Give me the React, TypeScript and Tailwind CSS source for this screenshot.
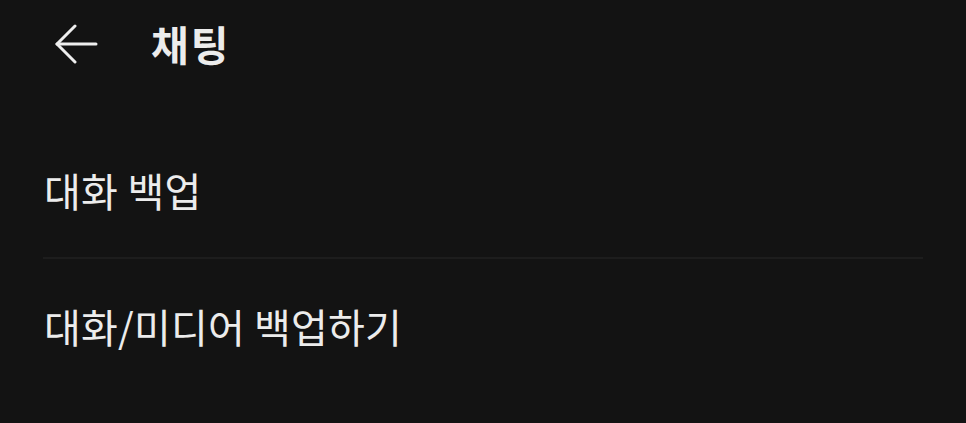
export default function App() {
  const font = { fontFamily: '"Noto Sans CJK KR", "Noto Sans", sans-serif' };
  return (
    <div className="w-[966px] h-[423px] bg-[#131313] text-[#ececec] overflow-hidden" style={font}>
      <div className="h-[88px] flex items-center">
        <div className="w-[151px] pl-[54px] flex items-center">
          <svg width="44" height="40" viewBox="0 0 44 40" fill="none" stroke="#eeeeee" strokeWidth="3" strokeLinecap="round" strokeLinejoin="round">
            <path d="M3 20 H42" />
            <path d="M21 2 L3 20 L21 38" />
          </svg>
        </div>
        <div className="text-[41px] font-bold leading-[48px] tracking-[2px] -mt-[3px]">채팅</div>
      </div>
      <div className="px-[43px]">
        <div className="pt-[78px] pb-[43px] text-[40px] leading-[48px] pl-[1px] tracking-[0.3px]">대화 백업</div>
        <div className="h-[2px] bg-[#1d1d1d]" />
        <div className="pt-[43px] text-[40px] leading-[48px] pl-[1px] tracking-[0.2px]">대화/미디어 백업하기</div>
      </div>
    </div>
  );
}
